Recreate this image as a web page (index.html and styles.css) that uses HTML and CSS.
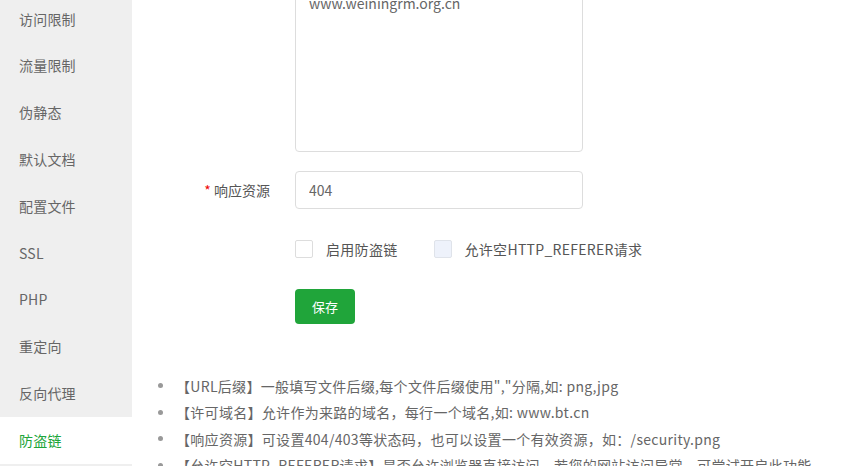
FILE: index.html
```html
<!DOCTYPE html>
<html lang="zh-CN">
<head>
<meta charset="utf-8">
<title>防盗链</title>
<link rel="stylesheet" href="styles.css">
</head>
<body>
<div class="page">
  <nav class="sidebar">
    <div class="nav-item">访问限制</div>
    <div class="nav-item">流量限制</div>
    <div class="nav-item">伪静态</div>
    <div class="nav-item">默认文档</div>
    <div class="nav-item">配置文件</div>
    <div class="nav-item">SSL</div>
    <div class="nav-item">PHP</div>
    <div class="nav-item">重定向</div>
    <div class="nav-item">反向代理</div>
    <div class="nav-item active">防盗链</div>
  </nav>
  <main class="main">
    <div class="form-row">
      <div class="label"></div>
      <textarea class="textarea" readonly>www.weiningrm.org.cn</textarea>
    </div>
    <div class="form-row row-input">
      <div class="label"><span class="req">*</span> 响应资源</div>
      <input class="input" type="text" value="404" readonly>
    </div>
    <div class="form-row row-check">
      <div class="label"></div>
      <label class="check"><span class="box"></span><span>启用防盗链</span></label>
      <label class="check"><span class="box box-light"></span><span>允许空HTTP_REFERER请求</span></label>
    </div>
    <div class="form-row row-btn">
      <div class="label"></div>
      <button class="btn" type="button">保存</button>
    </div>
    <ul class="tips">
      <li>【URL后缀】一般填写文件后缀,每个文件后缀使用","分隔,如: png,jpg</li>
      <li>【许可域名】允许作为来路的域名，每行一个域名,如: www.bt.cn</li>
      <li>【响应资源】可设置404/403等状态码，也可以设置一个有效资源，如：/security.png</li>
      <li>【允许空HTTP_REFERER请求】是否允许浏览器直接访问，若您的网站访问异常，可尝试开启此功能</li>
    </ul>
  </main>
</div>
</body>
</html>
```
FILE: styles.css
```css
html, body {
  margin: 0;
  padding: 0;
  background: #ffffff;
  overflow: hidden;
}
body {
  font-family: "Noto Sans CJK SC", "Noto Sans", sans-serif;
  font-size: 14px;
  color: #666;
}
.page {
  display: flex;
  height: 466px;
}
.sidebar {
  width: 132px;
  flex: none;
  background: #efefef;
  margin-top: -4.4px;
}
.nav-item {
  height: 46.8px;
  line-height: 46.8px;
  padding-left: 19px;
  color: #666;
  font-size: 14px;
  letter-spacing: 0.2px;
}
.nav-item.active {
  background: #fff;
  color: #20a53a;
}
.main {
  flex: 1;
  margin-top: -14px;
}
.form-row {
  display: flex;
  align-items: center;
}
.label {
  width: 138px;
  margin-right: 25px;
  text-align: right;
  color: #555;
  flex: none;
}
.req {
  color: #ef0808;
}
.textarea {
  box-sizing: border-box;
  width: 288px;
  height: 166px;
  border: 1px solid #ddd;
  border-radius: 4px;
  padding: 6px 13px;
  font-family: inherit;
  font-size: 14px;
  line-height: 20px;
  color: #666;
  resize: none;
  outline: none;
  overflow: hidden;
}
.row-input {
  margin-top: 19px;
}
.input {
  box-sizing: border-box;
  width: 288px;
  height: 38px;
  border: 1px solid #ddd;
  border-radius: 4px;
  padding: 0 13px;
  font-family: inherit;
  font-size: 14px;
  color: #666;
  outline: none;
}
.row-check {
  margin-top: 31px;
  height: 18px;
}
.check {
  display: flex;
  align-items: center;
  gap: 13px;
  margin-right: 36px;
  color: #555;
  letter-spacing: 0.3px;
}
.box {
  box-sizing: border-box;
  width: 18px;
  height: 18px;
  border: 1px solid #ddd;
  border-radius: 2px;
  background: #fff;
}
.box-light {
  background: #eef2fb;
  border-color: #dfe3ea;
}
.row-btn {
  margin-top: 31px;
}
.btn {
  width: 60px;
  height: 35px;
  border: none;
  border-radius: 4px;
  background: #20a53a;
  color: #fff;
  font-family: inherit;
  font-size: 13px;
  padding: 0;
}
.tips {
  list-style: none;
  margin: 48.5px 0 0 26px;
  padding: 0;
}
.tips li {
  display: flex;
  align-items: center;
  height: 26.5px;
  line-height: 26.5px;
  color: #666;
  white-space: nowrap;
  letter-spacing: 0.3px;
}
.tips li::before {
  content: "";
  width: 5px;
  height: 5px;
  border-radius: 50%;
  background: #999;
  margin-right: 13px;
  flex: none;
}
```
